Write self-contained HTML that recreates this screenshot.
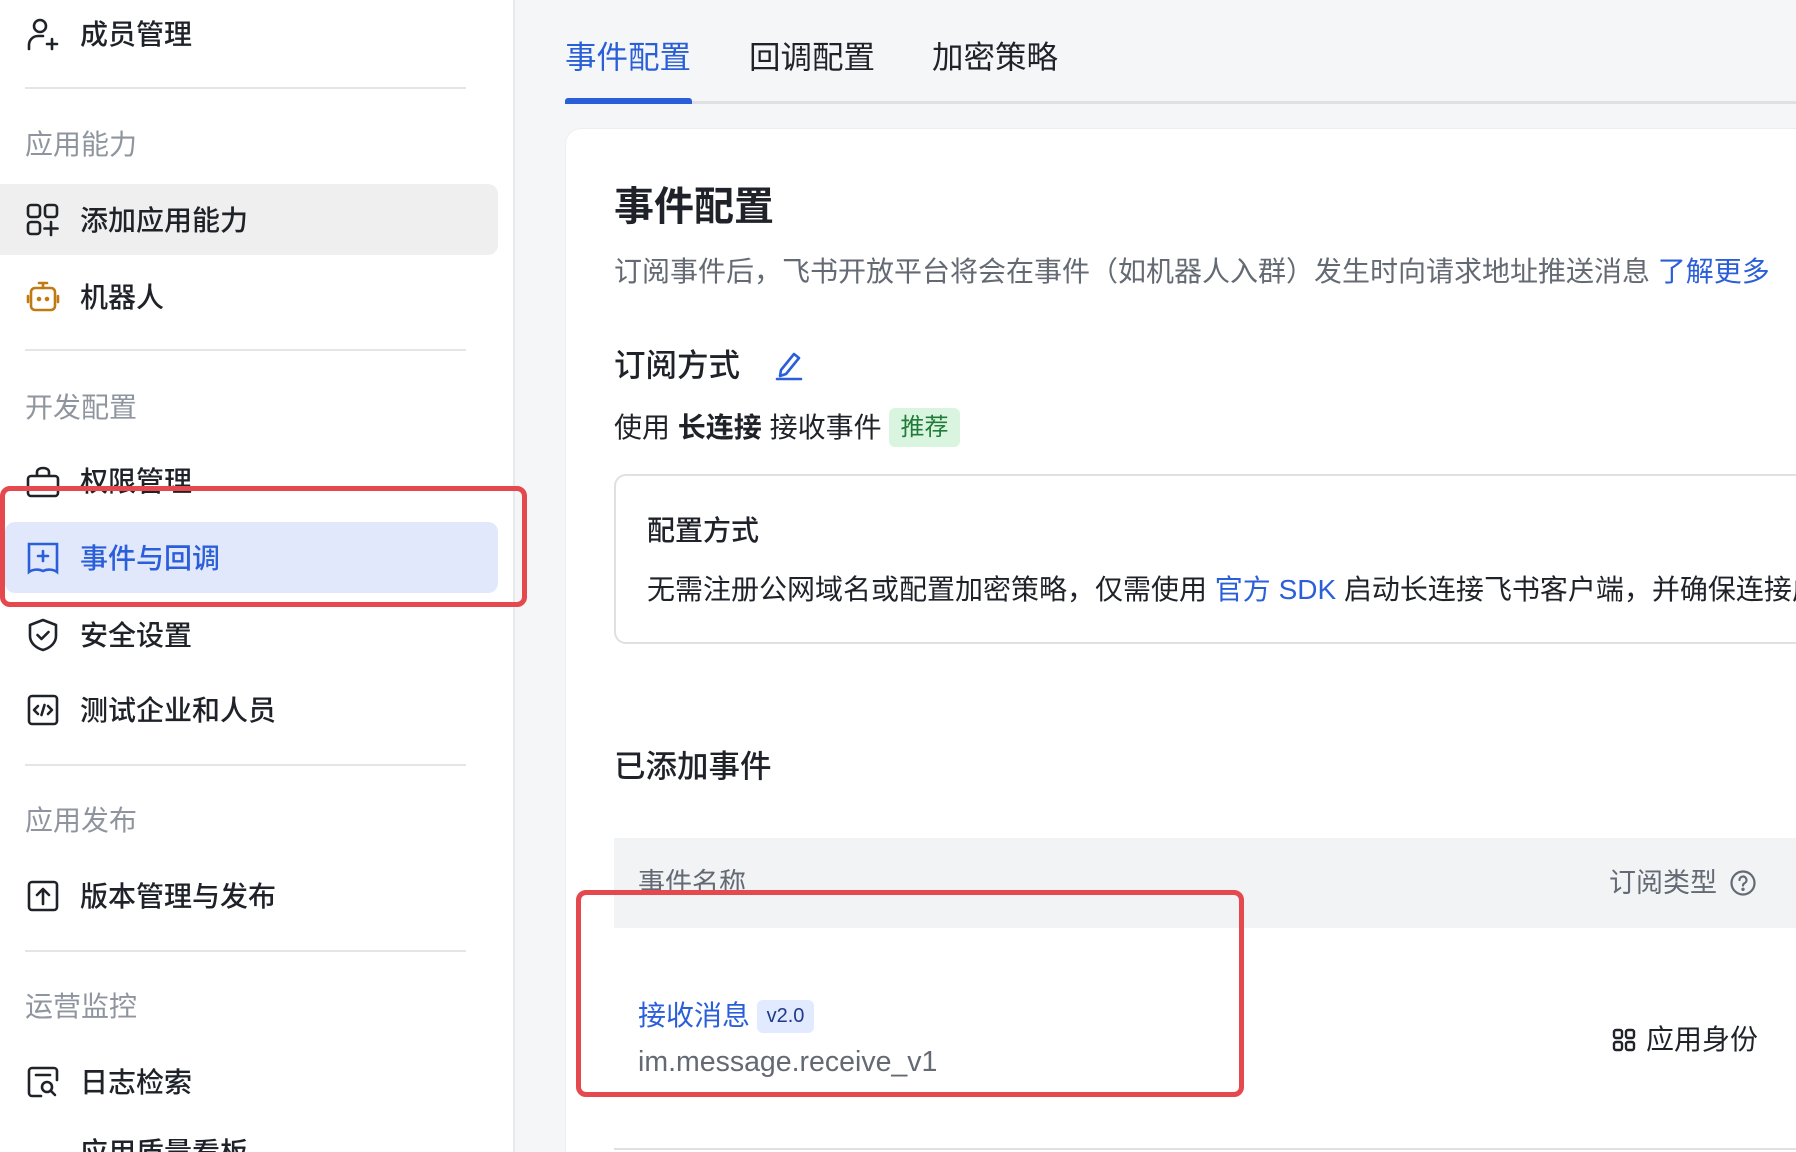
<!DOCTYPE html>
<html style="overflow:hidden;height:1152px"><head><meta charset="utf-8">
<style>
*{margin:0;padding:0;box-sizing:border-box}
body{width:1796px;height:1152px;overflow:hidden;background:#f5f6f7;font-family:"Liberation Sans","Noto Sans CJK SC",sans-serif;color:#1f2329;position:relative}
.a{position:absolute;white-space:nowrap;line-height:1}
.side{position:absolute;left:0;top:0;width:515px;height:1152px;background:#fff;border-right:2px solid #e8e9eb}
.div{position:absolute;left:25px;width:441px;height:2px;background:#e4e5e7}
.grp{color:#8f959e;font-size:28px}
.it{font-size:28px;color:#1f2329;left:80px;font-weight:500}
.ic{position:absolute;left:25px;width:36px;height:36px}
svg{display:block}
</style></head><body>
<div class="side"></div>
<svg class="ic" style="top:16px" viewBox="0 0 36 36" fill="none" stroke="#1f2329" stroke-width="2.6" stroke-linecap="round"><circle cx="15" cy="10" r="6"/><path d="M4 33v-4c0-5 4-9 9-9h5"/><path d="M27 23v10M22 28h10"/></svg>
<div class="a it" style="top:21px">成员管理</div>
<div class="div" style="top:87px"></div>
<div class="a grp" style="left:25px;top:131px">应用能力</div>
<div class="a" style="left:0;top:184px;width:498px;height:71px;background:#efefef;border-radius:0 10px 10px 0"></div>
<svg class="ic" style="top:202px" viewBox="0 0 36 36" fill="none" stroke="#1f2329" stroke-width="2.6" stroke-linecap="round"><rect x="3" y="3" width="12" height="12" rx="3"/><rect x="20" y="3" width="12" height="12" rx="3"/><rect x="3" y="20" width="12" height="12" rx="3"/><path d="M26 20v13M19.5 26.5h13"/></svg>
<div class="a it" style="top:207px">添加应用能力</div>
<svg class="ic" style="top:279px" viewBox="0 0 36 36" fill="none" stroke="#c07a12" stroke-width="2.6" stroke-linecap="round"><rect x="6" y="9" width="24" height="22" rx="4"/><path d="M18 9V5M14 4h8M3 17v6M33 17v6"/><circle cx="14" cy="20" r="1" fill="#c07a12"/><circle cx="22" cy="20" r="1" fill="#c07a12"/></svg>
<div class="a it" style="top:284px">机器人</div>
<div class="div" style="top:349px"></div>
<div class="a grp" style="left:25px;top:394px">开发配置</div>
<svg class="ic" style="top:464px" viewBox="0 0 36 36" fill="none" stroke="#1f2329" stroke-width="2.6"><rect x="3" y="12" width="30" height="20" rx="3"/><path d="M12 12V8c0-2 2-4 6-4s6 2 6 4v4"/></svg>
<div class="a it" style="top:468px">权限管理</div>
<div class="a" style="left:5px;top:522px;width:493px;height:71px;background:#e1e8fb;border-radius:10px"></div>
<svg class="ic" style="top:540px" viewBox="0 0 36 36" fill="none" stroke="#2b5fd9" stroke-width="2.6" stroke-linecap="round"><path d="M4 4h28v28c-4-3-10-3-14-1-4-2-10-2-14 1z"/><path d="M18 11v10M13 16h10"/></svg>
<div class="a it" style="top:545px;color:#2b5fd9">事件与回调</div>
<div class="a" style="left:0;top:486px;width:527px;height:121px;border:5px solid #e5484d;border-radius:10px"></div>
<svg class="ic" style="top:617px" viewBox="0 0 36 36" fill="none" stroke="#1f2329" stroke-width="2.6" stroke-linecap="round" stroke-linejoin="round"><path d="M18 3l13 5v11c0 7-6 12-13 14C11 31 5 26 5 19V8z"/><path d="M12.5 18l4 4 7-7"/></svg>
<div class="a it" style="top:622px">安全设置</div>
<svg class="ic" style="top:692px" viewBox="0 0 36 36" fill="none" stroke="#1f2329" stroke-width="2.6" stroke-linecap="round" stroke-linejoin="round"><rect x="4" y="4" width="28" height="28" rx="3"/><path d="M13 14l-4 4 4 4M23 14l4 4-4 4M19.5 13l-3 10"/></svg>
<div class="a it" style="top:697px">测试企业和人员</div>
<div class="div" style="top:764px"></div>
<div class="a grp" style="left:25px;top:807px">应用发布</div>
<svg class="ic" style="top:878px" viewBox="0 0 36 36" fill="none" stroke="#1f2329" stroke-width="2.6" stroke-linecap="round" stroke-linejoin="round"><rect x="4" y="4" width="28" height="28" rx="3"/><path d="M18 26V12M12 17l6-6 6 6"/></svg>
<div class="a it" style="top:883px">版本管理与发布</div>
<div class="div" style="top:950px"></div>
<div class="a grp" style="left:25px;top:993px">运营监控</div>
<svg class="ic" style="top:1064px" viewBox="0 0 36 36" fill="none" stroke="#1f2329" stroke-width="2.6" stroke-linecap="round"><path d="M16 32H7a3 3 0 0 1-3-3V7a3 3 0 0 1 3-3h22a3 3 0 0 1 3 3v9"/><path d="M11 11h14"/><circle cx="22" cy="23" r="5"/><path d="M26 27l4 4"/></svg>
<div class="a it" style="top:1069px">日志检索</div>
<div class="a it" style="top:1139px">应用质量看板</div>
<div class="a" style="left:565px;top:42px;font-size:31.5px;color:#2b5fd9">事件配置</div>
<div class="a" style="left:749px;top:42px;font-size:31.5px;color:#1f2329">回调配置</div>
<div class="a" style="left:932px;top:42px;font-size:31.5px;color:#1f2329">加密策略</div>
<div class="a" style="left:565px;top:101px;width:1231px;height:3px;background:#dee0e3"></div>
<div class="a" style="left:565px;top:98px;width:127px;height:6px;background:#2b5fd9;border-radius:3px 3px 0 0"></div>
<div class="a" style="left:565px;top:128px;width:1260px;height:1024px;background:#fff;border:1px solid #eceef0;border-bottom:none;border-radius:16px 16px 0 0"></div>
<div class="a" style="left:614px;top:187px;font-size:40px;font-weight:bold">事件配置</div>
<div class="a" style="left:614px;top:258px;font-size:28px;color:#646a73">订阅事件后，飞书开放平台将会在事件（如机器人入群）发生时向请求地址推送消息 <span style="color:#2b5fd9">了解更多</span></div>
<div class="a" style="left:614px;top:350px;font-size:31.5px;font-weight:500">订阅方式</div>
<svg class="a" style="left:774px;top:348px" width="30" height="34" viewBox="0 0 30 34" fill="none" stroke="#2b5fd9" stroke-width="2.6" stroke-linejoin="round"><path d="M7 22L20 6l5 4-13 16-6 2z"/><path d="M3 31h24" stroke-linecap="round"/></svg>
<div class="a" style="left:614px;top:414px;font-size:28px">使用 <b>长连接</b> 接收事件</div>
<div class="a" style="left:889px;top:408px;width:71px;height:39px;background:#d9f5e0;border-radius:6px;color:#237b3a;font-size:24px;line-height:39px;text-align:center">推荐</div>
<div class="a" style="left:614px;top:474px;width:1250px;height:170px;border:2px solid #dee0e3;border-radius:12px"></div>
<div class="a" style="left:647px;top:517px;font-size:28px;font-weight:500">配置方式</div>
<div class="a" style="left:647px;top:576px;font-size:28px">无需注册公网域名或配置加密策略，仅需使用 <span style="color:#2b5fd9">官方 SDK</span> 启动长连接飞书客户端，并确保连接成功</div>
<div class="a" style="left:614px;top:751px;font-size:31.5px;font-weight:500">已添加事件</div>
<div class="a" style="left:614px;top:838px;width:1182px;height:90px;background:#f2f3f5"></div>
<div class="a" style="left:638px;top:870px;font-size:27px;color:#646a73">事件名称</div>
<div class="a" style="left:1609px;top:870px;font-size:27px;color:#646a73">订阅类型</div>
<svg class="a" style="left:1729px;top:869px" width="28" height="28" viewBox="0 0 28 28" fill="none" stroke="#646a73" stroke-width="2.2" stroke-linecap="round"><circle cx="14" cy="14" r="11.5"/><path d="M10.5 11a3.5 3.5 0 1 1 5 3.2c-1 .5-1.5 1.2-1.5 2.3"/><circle cx="14" cy="20.3" r=".6" fill="#646a73"/></svg>
<div class="a" style="left:638px;top:1002px;font-size:28px;color:#2b5fd9">接收消息</div>
<div class="a" style="left:757px;top:1000px;width:57px;height:33px;background:#e1eaff;border-radius:6px;color:#1f3a8a;font-size:20px;line-height:33px;text-align:center">v2.0</div>
<div class="a" style="left:638px;top:1048px;font-size:28.5px;color:#646a73">im.message.receive_v1</div>
<svg class="a" style="left:1612px;top:1028px" width="24" height="24" viewBox="0 0 24 24" fill="none" stroke="#1f2329" stroke-width="2.4"><rect x="2" y="2" width="8" height="8" rx="2"/><rect x="14" y="2" width="8" height="8" rx="2"/><rect x="2" y="14" width="8" height="8" rx="2"/><rect x="14" y="14" width="8" height="8" rx="2"/></svg>
<div class="a" style="left:1646px;top:1026px;font-size:28px">应用身份</div>
<div class="a" style="left:614px;top:1148px;width:1182px;height:2px;background:#dee0e3"></div>
<div class="a" style="left:576px;top:890px;width:668px;height:207px;border:5px solid #e5484d;border-radius:10px"></div>
</body></html>
